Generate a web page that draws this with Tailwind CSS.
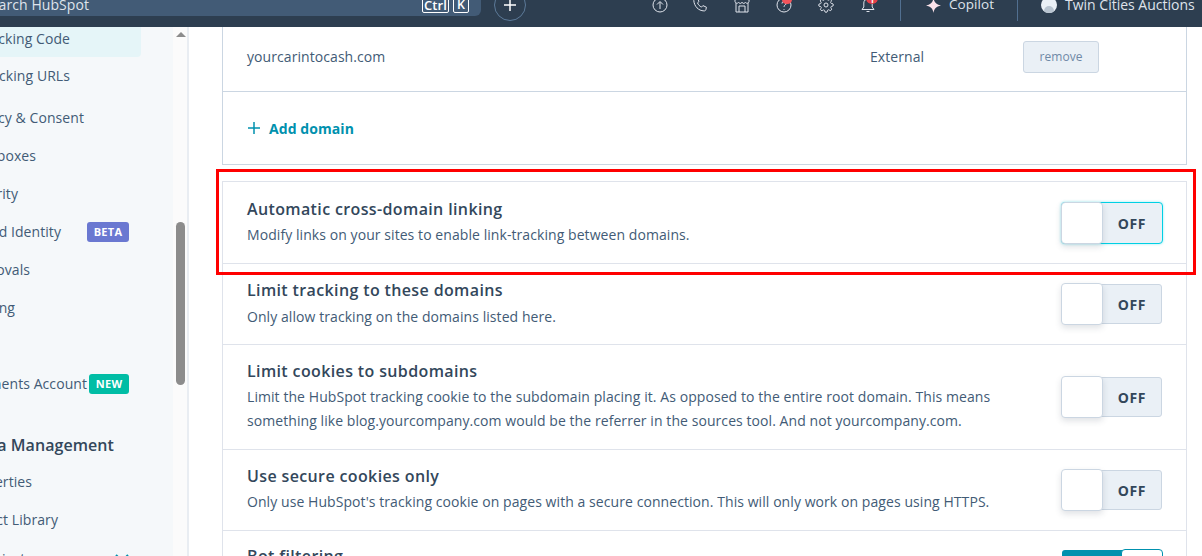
<!DOCTYPE html>
<html>
<head>
<meta charset="utf-8">
<script src="https://cdn.jsdelivr.net/npm/@tailwindcss/browser@4"></script>
</head>
<body class="overflow-hidden bg-white font-['Open_Sans','Lato',sans-serif] text-[14px] tracking-[0.07px] text-[#33475b]">
<div class="relative h-[556px] w-[1202px] overflow-hidden">
  <header class="h-[27px] overflow-hidden bg-[#2d3e50] text-[#dfe3eb]">
    <div class="flex h-[10px] items-center">
      <div class="relative -mt-[10px] flex h-[31px] w-[481px] shrink-0 items-center justify-between rounded-br-md bg-[#425b76] pr-[12px]">
        <div class="flex w-[89px] justify-end whitespace-nowrap pt-[9px] text-[14px]">Search HubSpot</div>
        <div class="flex gap-[4px] pt-[9px]">
          <span class="rounded-[2px] border border-white px-[1px] text-[13px] font-semibold leading-[14px] text-white">Ctrl</span>
          <span class="rounded-[2px] border border-white px-[3px] text-[12.5px] font-semibold leading-[14px] text-white">K</span>
        </div>
      </div>
      <div class="ml-[13px] flex h-[32px] w-[32px] shrink-0 items-center justify-center rounded-full border border-[#5c7a99]">
        <svg width="14" height="14" viewBox="0 0 14 14" fill="none" stroke="#fff" stroke-width="1.5"><path d="M7 1v12M1 7h12"/></svg>
      </div>
      <svg class="ml-[126px] shrink-0" width="16" height="16" viewBox="0 0 16 16" fill="none" stroke="#dfe3eb" stroke-width="1"><circle cx="8" cy="8" r="7"/><path d="M8 12V5M5 7.5 8 4.5l3 3"/></svg>
      <svg class="ml-[24px] shrink-0" width="16" height="16" viewBox="0 0 16 16" fill="none" stroke="#dfe3eb" stroke-width="1"><path d="M3 1.500 5.500 1l1.500 3.500-1.500 1.300c.7 1.900 2.200 3.500 4 4.300l1.400-1.500 3.500 1.600-.5 2.500c-.3.900-1.100 1.300-2 1.200C6.500 13.700 2.300 9.500 1.800 3.500 1.700 2.600 2.200 1.800 3 1.500z"/></svg>
      <svg class="ml-[26px] shrink-0" width="16" height="16" viewBox="0 0 16 16" fill="none" stroke="#dfe3eb" stroke-width="1"><path d="M2 6V15h12V6M1 1h14v3.500a2 2 0 0 1-3.500 1 2.300 2.300 0 0 1-3.500 0 2.300 2.300 0 0 1-3.500 0A2 2 0 0 1 1 4.500zM5 15v-6h6v6"/></svg>
      <div class="relative ml-[26px] h-[16px] w-[16px] shrink-0">
        <svg width="16" height="16" viewBox="0 0 16 16" fill="none" stroke="#dfe3eb" stroke-width="1"><circle cx="8" cy="8" r="7"/><path d="M6 6.500a2 2 0 1 1 3 1.700c-.7.400-1 .8-1 1.600M8 12v.8"/></svg>
        <span class="absolute -top-[2px] left-[6px] h-[9px] w-[10px] rounded-full bg-[#f2545b]"></span>
      </div>
      <svg class="ml-[26px] shrink-0" width="16" height="16" viewBox="0 0 24 24" fill="none" stroke="#dfe3eb" stroke-width="1.500"><circle cx="12" cy="12" r="3"/><path d="M19.400 15a1.650 1.650 0 0 0 .33 1.820l.06.06a2 2 0 1 1-2.830 2.830l-.06-.06a1.650 1.650 0 0 0-2.800 1.170V21a2 2 0 1 1-4 0v-.09A1.650 1.650 0 0 0 7.300 19.800l-.06.06a2 2 0 1 1-2.830-2.830l.06-.06a1.650 1.650 0 0 0-1.170-2.800H3a2 2 0 1 1 0-4h.09A1.650 1.650 0 0 0 4.200 7.300l-.06-.06a2 2 0 1 1 2.830-2.830l.06.06a1.650 1.650 0 0 0 2.800-1.170V3a2 2 0 1 1 4 0v.09a1.650 1.650 0 0 0 2.800 1.170l.06-.06a2 2 0 1 1 2.830 2.830l-.06.06a1.650 1.650 0 0 0 1.170 2.800H21a2 2 0 1 1 0 4h-.09a1.650 1.650 0 0 0-1.510 1z"/></svg>
      <div class="relative ml-[26px] h-[16px] w-[16px] shrink-0">
        <svg width="16" height="16" viewBox="0 0 16 16" fill="none" stroke="#dfe3eb" stroke-width="1"><path d="M2 12.500h12l-1.800-2.500V6A4.200 4.200 0 0 0 3.800 6v4zM6.500 14.500h3"/></svg>
        <span class="absolute -top-[0px] left-[6px] flex h-[7px] w-[12px] items-end justify-center rounded-b-full bg-[#e5404a] text-[8px] font-bold leading-none text-white">1</span>
      </div>
      <div class="ml-[24px] h-[21px] w-px shrink-0 self-start bg-[#516f90]"></div>
      <svg class="ml-[25px] shrink-0" width="15" height="15" viewBox="0 0 16 16" fill="#fde4ec"><path d="M8 0c.7 4.600 2.700 6.900 8 8-5.300 1.100-7.300 3.400-8 8-.7-4.600-2.700-6.900-8-8 5.300-1.100 7.300-3.400 8-8z"/></svg>
      <span class="ml-[8px] w-[44px] whitespace-nowrap pb-[1px] text-[13.5px]">Copilot</span>
      <div class="ml-[24px] h-[21px] w-px shrink-0 self-start bg-[#516f90]"></div>
      <span class="relative ml-[23px] h-[16px] w-[16px] shrink-0 overflow-hidden rounded-full bg-[#eaf0f6]"><span class="absolute left-[3px] top-[9px] h-[10px] w-[10px] rounded-full bg-[#b8c4d0]"></span></span>
      <span class="ml-[8px] whitespace-nowrap pb-[1px] text-[14px] tracking-normal">Twin Cities Auctions</span>
    </div>
  </header>

  <div class="flex h-[529px]">
    <aside class="relative flex h-full w-[189px] shrink-0 border-r-2 border-[#e9edf2] bg-[#fbfbfb]">
      <nav class="h-full w-[173px] shrink-0 overflow-hidden bg-[#f5f8fa] text-[#425b76]">
        <div class="flex h-[30px] w-[141px] items-center rounded-br-sm bg-[#e5f5f8] pb-[8px]"><span class="flex w-[70px] justify-end whitespace-nowrap">Tracking Code</span></div>
        <div class="flex h-[38px] items-center pb-[2px]"><span class="flex w-[70px] justify-end whitespace-nowrap">Tracking URLs</span></div>
        <div class="mt-[4px] flex h-[38px] items-center pb-[2px]"><span class="flex w-[84px] justify-end whitespace-nowrap">Privacy &amp; Consent</span></div>
        <div class="flex h-[38px] items-center pb-[2px]"><span class="flex w-[36px] justify-end whitespace-nowrap">Sandboxes</span></div>
        <div class="flex h-[38px] items-center pb-[2px]"><span class="flex w-[18px] justify-end whitespace-nowrap">Security</span></div>
        <div class="flex h-[38px] items-center">
          <span class="flex w-[61px] justify-end whitespace-nowrap pb-[2px]">Brand Identity</span>
          <span class="ml-[26px] flex h-[20px] w-[42px] items-center justify-center rounded-[3px] bg-[#6a78d1] text-[11px] font-bold tracking-[0.3px] text-white">BETA</span>
        </div>
        <div class="flex h-[38px] items-center pb-[2px]"><span class="flex w-[30px] justify-end whitespace-nowrap">Approvals</span></div>
        <div class="flex h-[38px] items-center pb-[2px]"><span class="flex w-[15px] justify-end whitespace-nowrap">Billing</span></div>
        <div class="mt-[38px] flex h-[38px] items-center">
          <span class="flex w-[87px] justify-end whitespace-nowrap pb-[2px]">Payments Account</span>
          <span class="ml-[2px] flex h-[20px] w-[40px] items-center justify-center rounded-[3px] bg-[#00bda5] text-[11px] font-bold tracking-[0.3px] text-white">NEW</span>
        </div>
        <div class="mt-[24px] flex h-[38px] items-center pb-[2px]"><span class="flex w-[114px] justify-end whitespace-nowrap text-[16px] font-semibold text-[#33475b]">Data Management</span></div>
        <div class="flex h-[34px] items-center pb-[2px]"><span class="flex w-[32px] justify-end whitespace-nowrap">Properties</span></div>
        <div class="flex h-[42px] items-center pb-[2px]"><span class="flex w-[58px] justify-end whitespace-nowrap">Object Library</span></div>
        <div class="flex h-[34px] items-center justify-between"><span class="flex w-[32px] justify-end whitespace-nowrap">Objects</span>
          <svg class="mr-[44px]" width="14" height="8" viewBox="0 0 14 8" fill="none" stroke="#0091ae" stroke-width="2"><path d="m1 1 6 6 6-6"/></svg>
        </div>
      </nav>
      <div class="flex w-[15px] shrink-0 flex-col items-center pt-[5px]">
        <span class="h-0 w-0 border-x-[5px] border-b-[5px] border-x-transparent border-b-[#8c8c8c]"></span>
        <span class="mt-[185px] h-[163px] w-[9px] rounded-full bg-[#8c8c8c]"></span>
      </div>
    </aside>

    <main class="min-w-0 flex-1 pl-[33px] pr-[15px]">
      <section class="border-x border-b border-[#cbd6e2]">
        <div class="flex h-[65px] items-center border-b border-[#cbd6e2] pb-[5px] pl-[24px]">
          <span class="w-[623px] text-[#425b76]">yourcarintocash.com</span>
          <span class="w-[153px] text-[#425b76]">External</span>
          <button class="mt-[1px] h-[32px] w-[76px] rounded-[3px] border border-[#cbd6e2] bg-[#eaf0f6] text-[12px] text-[#6f89a6]">remove</button>
        </div>
        <div class="flex h-[72px] items-center gap-[8px] pl-[24px] font-bold text-[#0091ae]">
          <svg width="14" height="14" viewBox="0 0 14 14" fill="none" stroke="#0091ae" stroke-width="1.500"><path d="M7 1v12M1 7h12"/></svg>
          <span>Add domain</span>
        </div>
      </section>

      <section class="mt-[16px] border-x border-t border-[#dfe3eb]">
        <div class="flex h-[82px] items-center justify-between border-b border-[#dfe3eb] pl-[24px] pr-[23px]">
          <div class="flex flex-col gap-[2px] pb-[1px]">
            <h3 class="text-[16px] font-semibold leading-[24px] tracking-[0.37px]">Automatic cross-domain linking</h3>
            <p class="leading-[24px] text-[#425b76]">Modify links on your sites to enable link-tracking between domains.</p>
          </div>
          <div class="relative h-[42px] w-[102px] shrink-0 rounded-[4px] border border-[#00d0e4] bg-[#eaf0f6] shadow-[0_0_3px_rgba(0,208,228,0.4)]">
            <span class="absolute -left-px -top-px h-[42px] w-[42px] rounded-[4px] border border-[#cbd6e2] bg-white shadow-[0_3px_6px_rgba(45,62,80,0.15)]"></span>
            <span class="absolute right-[16px] top-[12px] text-[14px] font-bold leading-[18px] tracking-[0.6px]">OFF</span>
          </div>
        </div>
        <div class="flex h-[81px] items-center justify-between border-b border-[#dfe3eb] pl-[24px] pr-[24px]">
          <div class="flex flex-col gap-[3px] pb-[1px]">
            <h3 class="text-[16px] font-semibold leading-[24px] tracking-[0.37px]">Limit tracking to these domains</h3>
            <p class="leading-[24px] text-[#425b76]">Only allow tracking on the domains listed here.</p>
          </div>
          <div class="relative h-[40px] w-[100px] shrink-0 rounded-[3px] border border-[#cbd6e2] bg-[#eaf0f6]">
            <span class="absolute -left-[2px] -top-[2px] h-[42px] w-[42px] rounded-[4px] border border-[#cbd6e2] bg-white shadow-[0_3px_6px_rgba(45,62,80,0.15)]"></span>
            <span class="absolute right-[15px] top-[11px] text-[14px] font-bold leading-[18px] tracking-[0.6px]">OFF</span>
          </div>
        </div>
        <div class="flex h-[105px] items-center justify-between border-b border-[#dfe3eb] pl-[24px] pr-[24px]">
          <div class="flex w-[770px] flex-col gap-[2px] pb-[3px]">
            <h3 class="text-[16px] font-semibold leading-[24px] tracking-[0.37px]">Limit cookies to subdomains</h3>
            <p class="leading-[24px] text-[#425b76]">Limit the HubSpot tracking cookie to the subdomain placing it. As opposed to the entire root domain. This means something like blog.yourcompany.com would be the referrer in the sources tool. And not yourcompany.com.</p>
          </div>
          <div class="relative h-[40px] w-[100px] shrink-0 rounded-[3px] border border-[#cbd6e2] bg-[#eaf0f6]">
            <span class="absolute -left-[2px] -top-[2px] h-[42px] w-[42px] rounded-[4px] border border-[#cbd6e2] bg-white shadow-[0_3px_6px_rgba(45,62,80,0.15)]"></span>
            <span class="absolute right-[15px] top-[11px] text-[14px] font-bold leading-[18px] tracking-[0.6px]">OFF</span>
          </div>
        </div>
        <div class="flex h-[81px] items-center justify-between border-b border-[#dfe3eb] pl-[24px] pr-[24px]">
          <div class="flex flex-col gap-[2px] pb-[3px]">
            <h3 class="text-[16px] font-semibold leading-[24px] tracking-[0.37px]">Use secure cookies only</h3>
            <p class="leading-[24px] text-[#425b76]">Only use HubSpot's tracking cookie on pages with a secure connection. This will only work on pages using HTTPS.</p>
          </div>
          <div class="relative h-[40px] w-[100px] shrink-0 rounded-[3px] border border-[#cbd6e2] bg-[#eaf0f6]">
            <span class="absolute -left-[2px] -top-[2px] h-[42px] w-[42px] rounded-[4px] border border-[#cbd6e2] bg-white shadow-[0_3px_6px_rgba(45,62,80,0.15)]"></span>
            <span class="absolute right-[15px] top-[11px] text-[14px] font-bold leading-[18px] tracking-[0.6px]">OFF</span>
          </div>
        </div>
        <div class="flex h-[81px] items-start justify-between pl-[24px] pr-[24px] pt-[13px]">
          <h3 class="text-[16px] font-semibold leading-[24px] tracking-[0.37px]">Bot filtering</h3>
          <div class="relative mt-[6px] h-[40px] w-[100px] shrink-0 rounded-[3px] bg-[#0091ae]">
            <span class="absolute -right-[1px] -top-[1px] h-[42px] w-[42px] rounded-[4px] border border-[#0091ae] bg-white"></span>
          </div>
        </div>
      </section>
    </main>
  </div>
  <div class="pointer-events-none absolute left-[216px] top-[169px] h-[106px] w-[980px] border-[3px] border-[#ff0000]"></div>
</div>
</body>
</html>
